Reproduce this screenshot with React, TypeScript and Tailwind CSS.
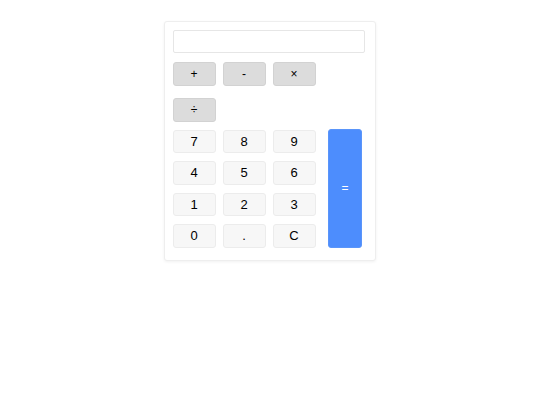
export default function App() {
  const ops = ["+", "-", "×", "÷"];
  const keys = ["7", "8", "9", "4", "5", "6", "1", "2", "3", "0", ".", "C"];

  return (
    <div className="min-h-screen bg-white flex justify-center pt-[21px] font-['Liberation_Sans',Arial,sans-serif] text-[13px] text-black">
      <div className="w-[212px] h-[240px] bg-white border border-[#eeeeee] rounded-[3px] shadow-[0_1px_3px_rgba(0,0,0,0.06)] p-[8px]">
        <input
          type="text"
          className="block w-[192px] h-[23px] border border-[#e6e6e6] rounded-[2px] px-2 outline-none"
        />

        <div className="mt-[9px] flex flex-wrap w-[160px] gap-x-[7px] gap-y-[12.5px]">
          {ops.map((op) => (
            <button
              key={op}
              className="w-[43px] h-[23.5px] bg-[#dcdcdc] border border-[#d2d2d2] rounded-[3px] flex items-center justify-center leading-none text-[12px] pr-px"
            >
              {op}
            </button>
          ))}
        </div>

        <div className="mt-[8px] flex items-stretch">
          <div className="grid grid-cols-[43px_43px_43px] gap-x-[7px] gap-y-[8px]">
            {keys.map((k) => (
              <button
                key={k}
                className="h-[23.5px] bg-[#f7f7f7] border border-[#ececec] rounded-[3px] flex items-center justify-center leading-none pr-px"
              >
                {k}
              </button>
            ))}
          </div>
          <button className="ml-[12px] -mt-px w-[34px] bg-[#4d8dfd] border border-[#5a95fa] rounded-[3px] text-white text-[12px] flex items-center justify-center">
            =
          </button>
        </div>
      </div>
    </div>
  );
}
